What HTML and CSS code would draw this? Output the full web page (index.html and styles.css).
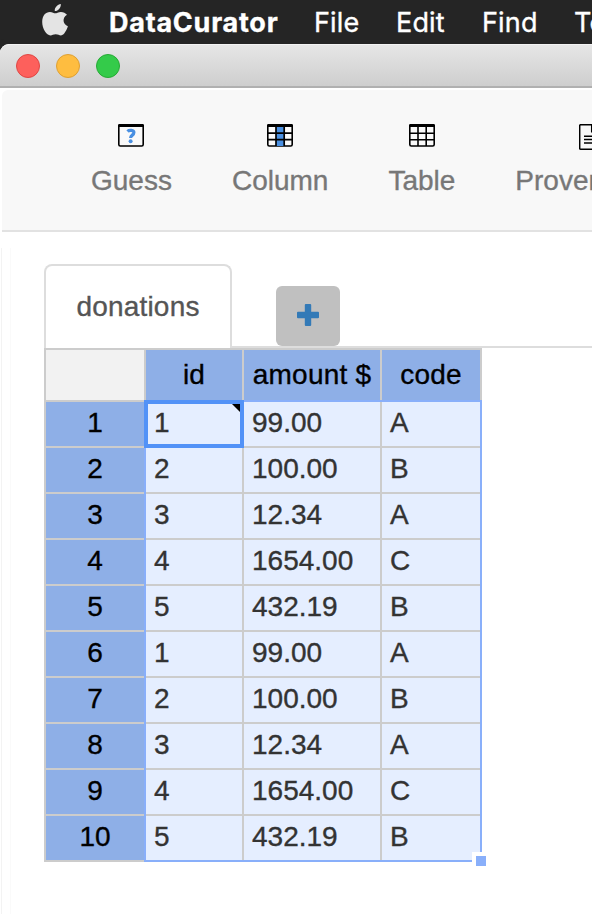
FILE: index.html
```html
<!DOCTYPE html>
<html lang="en">
<head>
<meta charset="utf-8">
<title>DataCurator</title>
<link rel="stylesheet" href="styles.css">
</head>
<body>
<header class="menubar">
  <svg class="apple" width="26" height="32" viewBox="0 0 26 32"><path d="M18.800 0c.4 3.400-2.400 7-6 7.100C12.300 3.700 15.600.4 18.800 0zM13.300 9.300c1.300 0 3-1.400 5.600-1.400 2.500 0 4.700 1 6.100 2.900-5.100 3-4.300 9.500.9 11.500-1.200 3.500-3.800 9.100-6.900 9.100-2 0-2.700-1.200-5.300-1.200s-3.300 1.200-5.300 1.200C4.600 31.400.200 25 .2 18 .2 11.500 3.600 7.900 7.900 7.900c2.400 0 4.100 1.400 5.400 1.400z"/></svg>
  <span class="menu app-name">DataCurator</span>
  <span class="menu file">File</span>
  <span class="menu edit">Edit</span>
  <span class="menu find">Find</span>
  <span class="menu tools">Tools</span>
</header>
<div class="titlebar">
  <span class="light red"></span><span class="light amber"></span><span class="light green"></span>
</div>
<nav class="toolbar">
  <div class="tool">
    <svg width="26" height="28" viewBox="0 0 26 28"><rect x=".8" y=".8" width="24.400" height="21.200" rx="1.500" fill="#fafafa" stroke="#000" stroke-width="1.600"/><path d="M1 0h24l1 1v2H0V1z"/><path d="M9.400 7.400c2-1.700 6.500-1.500 6.500 1.200 0 2.700-3.300 2.400-3.300 5.400" fill="none" stroke="#4a90e2" stroke-width="3.200"/><circle cx="12.600" cy="17.200" r="2" fill="#4a90e2"/></svg>
    <span>Guess</span>
  </div>
  <div class="tool">
    <svg width="26" height="28" viewBox="0 0 26 28"><rect x=".8" y=".8" width="24.400" height="21.200" rx="1.500" fill="#fafafa" stroke="#000" stroke-width="1.600"/><path d="M9 2h8v20H9z" fill="#4a90e2"/><path d="M1 0h24l1 1v2H0V1z"/><path d="M1 9.200h24M1 15.700h24M9 2v20M17.200 2v20" fill="none" stroke="#000" stroke-width="1.700"/></svg>
    <span>Column</span>
  </div>
  <div class="tool">
    <svg width="26" height="28" viewBox="0 0 26 28"><rect x=".8" y=".8" width="24.400" height="21.200" rx="1.500" fill="#fafafa" stroke="#000" stroke-width="1.600"/><path d="M1 0h24l1 1v2H0V1z"/><path d="M1 9.200h24M1 15.700h24M9 2v20M17.200 2v20" fill="none" stroke="#000" stroke-width="1.600"/></svg>
    <span>Table</span>
  </div>
  <div class="tool">
    <svg width="22" height="28" viewBox="0 0 22 28"><path d="M1.700.7h11l7.600 7v16.600q0 1-1 1H1.700q-1 0-1-1V1.700q0-1 1-1zM12.700.7v7h7.600M5 12.300h12M5 15.500h12M5 18.900h12" fill="none" stroke="#000" stroke-width="1.500"/></svg>
    <span>Provenance</span>
  </div>
</nav>
<main class="content">
  <div class="tabs">
    <div class="tab">donations</div>
    <button class="add" aria-label="Add tab"><svg width="22" height="22" viewBox="0 0 22 22"><path d="M7.800 1q0-1 1-1h4.400q1 0 1 1v6.800h6.800q1 0 1 1v4.400q0 1-1 1h-6.800v6.800q0 1-1 1H8.800q-1 0-1-1v-6.800H1q-1 0-1-1V8.800q0-1 1-1h6.800z" fill="#337ab7"/></svg></button>
  </div>
  <div class="sheet">
    <div class="grid">
      <div class="head corner"></div><div class="head">id</div><div class="head">amount $</div><div class="head">code</div>
      <div class="num">1</div><div>1</div><div>99.00</div><div>A</div>
      <div class="num">2</div><div>2</div><div>100.00</div><div>B</div>
      <div class="num">3</div><div>3</div><div>12.34</div><div>A</div>
      <div class="num">4</div><div>4</div><div>1654.00</div><div>C</div>
      <div class="num">5</div><div>5</div><div>432.19</div><div>B</div>
      <div class="num">6</div><div>1</div><div>99.00</div><div>A</div>
      <div class="num">7</div><div>2</div><div>100.00</div><div>B</div>
      <div class="num">8</div><div>3</div><div>12.34</div><div>A</div>
      <div class="num">9</div><div>4</div><div>1654.00</div><div>C</div>
      <div class="num">10</div><div>5</div><div>432.19</div><div>B</div>
    </div>
    <div class="selection"></div>
    <div class="active-cell"></div>
    <div class="handle"></div>
  </div>
</main>
</body>
</html>
```
FILE: styles.css
```css
* { box-sizing: border-box; }
body {
  margin: 0;
  width: 592px;
  height: 914px;
  overflow: hidden;
  background: #fff;
  font: 28px/40px "Liberation Sans", Arial, sans-serif;
  -webkit-text-stroke: .35px;
}
.menubar {
  display: flex;
  height: 44px;
  padding-left: 42px;
  background: #252525;
  color: #fff;
  font: 27px/46px Inter, sans-serif;
  white-space: nowrap;
  overflow: hidden;
}
.apple { flex: none; margin-top: 4px; fill: #e4e4e4; }
.menu { flex: none; letter-spacing: .15px; }
.app-name { width: 170px; margin-left: 41px; font-weight: 700; letter-spacing: .75px; }
.file { width: 45px; margin-left: 35px; }
.edit { width: 50px; margin-left: 37px; }
.find { width: 55px; margin-left: 36px; }
.tools { margin-left: 37px; }
.titlebar {
  display: flex;
  gap: 16px;
  height: 44px;
  padding: 10px 16px;
  border-top: 1px solid #f3f3f3;
  border-bottom: 2px solid #b0b0b0;
  border-top-left-radius: 9px;
  background: linear-gradient(#e6e6e6, #cecece);
  box-shadow: -5px -5px 0 #252525;
}
.light { width: 24px; height: 24px; margin-top: -1px; border-radius: 50%; border: 1px solid; }
.red { background: #fd605c; border-color: #df4744; }
.amber { background: #febd40; border-color: #dea033; }
.green { background: #34cb4a; border-color: #27aa35; }
.toolbar {
  display: flex;
  height: 142px;
  margin: 2px 0 0 2px;
  padding: 34px 0 0 59px;
  background: #f8f8f8;
  border-bottom: 2px solid #e2e2e2;
  border-top-left-radius: 6px;
  color: #777;
  overflow: hidden;
}
.tool {
  flex: none;
  display: flex;
  flex-direction: column;
  align-items: center;
  padding: 0 30px;
}
.tool span { margin-top: 9px; }
.content {
  height: 682px;
  padding: 32px 0 0 44px;
  background:
    linear-gradient(#fafafa, #fafafa) 10px 16px / 1px 100% no-repeat,
    linear-gradient(#f3f3f3, #f3f3f3) 1px 16px / 1px 100% no-repeat;
}
.tabs { display: flex; align-items: flex-end; height: 84px; border-bottom: 2px solid #ddd; }
.tab {
  width: 188px;
  height: 84px;
  margin-bottom: -2px;
  border: 2px solid #ddd;
  border-bottom: 0;
  border-radius: 8px 8px 0 0;
  background: #fff;
  color: #555;
  line-height: 82px;
  letter-spacing: .2px;
  text-align: center;
}
.add {
  display: flex;
  align-items: center;
  justify-content: center;
  width: 64px;
  height: 60px;
  margin-left: 44px;
  padding: 0 0 2px;
  border: 0;
  border-radius: 6px;
  background: #c0c0c0;
}
.sheet { position: relative; width: 438px; }
.grid {
  display: grid;
  grid-template-columns: 98px 96px 136px 98px;
  grid-template-rows: 50px;
  grid-auto-rows: 44px;
  gap: 2px;
  padding: 2px;
  background: #ccc;
  color: #333;
}
.grid div { padding-left: 8px; background: #e5eeff; line-height: 42px; white-space: nowrap; }
.grid .head, .grid .num { padding: 0; background: #8eafe7; color: #000; text-align: center; }
.grid .head { line-height: 50px; letter-spacing: .2px; }
.grid .corner { background: #f2f2f2; }
.selection { position: absolute; left: 100px; top: 52px; width: 338px; height: 462px; border: 2px solid #89affa; }
.active-cell { position: absolute; left: 100px; top: 52px; width: 100px; height: 48px; border: 4px solid #5292f7; }
.active-cell::after {
  content: "";
  position: absolute;
  right: 0;
  top: 0;
  width: 8px;
  height: 8px;
  background: #000;
  clip-path: polygon(0 0, 100% 0, 100% 100%);
}
.handle { position: absolute; left: 428px; top: 504px; width: 14px; height: 14px; border: solid #fff; border-width: 4px 0 0 4px; background: #89affa; }
```
